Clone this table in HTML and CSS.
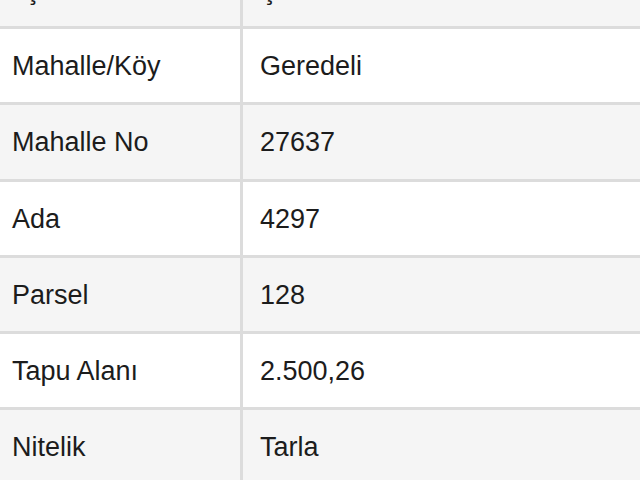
FILE: index.html
```html
<!DOCTYPE html>
<html lang="tr">
<head>
<meta charset="utf-8">
<link rel="stylesheet" href="styles.css">
</head>
<body>
<div class="table">
  <div class="row alt"><div class="key">İlçe</div><div class="val">Şile</div></div>
  <div class="row"><div class="key">Mahalle/Köy</div><div class="val">Geredeli</div></div>
  <div class="row alt"><div class="key">Mahalle No</div><div class="val">27637</div></div>
  <div class="row"><div class="key">Ada</div><div class="val">4297</div></div>
  <div class="row alt"><div class="key">Parsel</div><div class="val">128</div></div>
  <div class="row"><div class="key">Tapu Alanı</div><div class="val">2.500,26</div></div>
  <div class="row alt"><div class="key">Nitelik</div><div class="val">Tarla</div></div>
</div>
</body>
</html>
```
FILE: styles.css
```css
html, body {
  margin: 0;
  padding: 0;
  background: #ffffff;
  overflow: hidden;
}
.table {
  margin-top: -47px;
  font-family: "Liberation Sans", Arial, sans-serif;
  font-size: 27px;
  color: #1c1c1c;
}
.row {
  display: grid;
  grid-template-columns: 243px 1fr;
  height: 73.2px;
  border-bottom: 3px solid #dcdcdc;
  background: #ffffff;
}
.row.alt {
  background: #f5f5f5;
}
.key, .val {
  display: flex;
  align-items: center;
  padding-top: 2px;
}
.key {
  padding-left: 12px;
  border-right: 3px solid #dcdcdc;
}
.val {
  padding-left: 17px;
}
```
